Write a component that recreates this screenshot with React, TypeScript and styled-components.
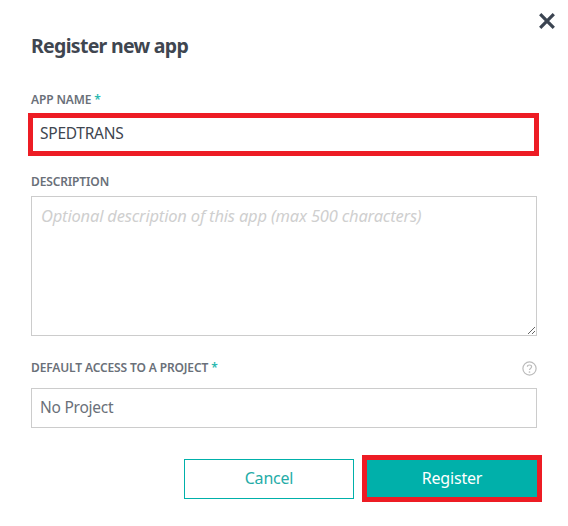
import styled, { createGlobalStyle } from "styled-components";

const GlobalStyle = createGlobalStyle`
  html, body {
    margin: 0;
    background: #fff;
  }
  body {
    font-family: "Noto Sans", "Open Sans", sans-serif;
  }
  * {
    box-sizing: border-box;
  }
`;

const Dialog = styled.div`
  position: relative;
  width: 568px;
  height: 526px;
  padding: 32px 31px 0;
  background: #fff;
  overflow: hidden;
`;

const CloseButton = styled.button`
  position: absolute;
  top: 13px;
  right: 13px;
  width: 16px;
  height: 16px;
  padding: 0;
  border: 0;
  background: none;
  color: #3b4451;
  display: flex;
`;

const Title = styled.h2`
  margin: 0;
  font-size: 19.5px;
  line-height: 28px;
  font-weight: 700;
  letter-spacing: -0.7px;
  color: #3f4650;
`;

const Field = styled.div<{ $top: number }>`
  margin-top: ${(p) => p.$top}px;
`;

const LabelRow = styled.div<{ $gap: number }>`
  display: flex;
  justify-content: space-between;
  align-items: center;
  height: 14px;
  margin-bottom: ${(p) => p.$gap}px;
`;

const Label = styled.label`
  font-size: 12px;
  line-height: 14px;
  font-weight: 600;
  letter-spacing: -0.13px;
  text-transform: uppercase;
  color: #6a7079;
`;

const Required = styled.span`
  color: #2bb8b0;
`;

const HelpIcon = styled.span`
  display: flex;
  color: #bcbcbc;
`;

const Highlight = styled.div`
  margin: 0 -2px 0 -3px;
  border: 5px solid #ed1c24;
`;

const TextInput = styled.input<{ $bare?: boolean }>`
  display: block;
  width: 100%;
  height: ${(p) => (p.$bare ? "33px" : "40px")};
  padding: ${(p) => (p.$bare ? "0 7px 3px" : "0 9px 2px 8px")};
  border: ${(p) => (p.$bare ? "0" : "1px solid #cccccc")};
  border-radius: 0;
  outline: none;
  font-family: inherit;
  font-size: 15.5px;
  letter-spacing: -0.25px;
  color: ${(p) => (p.$bare ? "#3f4650" : "#6a7079")};
  background: #fff;
`;

const TextArea = styled.textarea`
  display: block;
  width: 100%;
  height: 140px;
  padding: 7px 9px;
  border: 1px solid #cccccc;
  border-radius: 0;
  outline: none;
  font-family: inherit;
  font-size: 16.5px;
  line-height: 24px;
  letter-spacing: -0.18px;
  background: #fff;

  &::placeholder {
    font-style: italic;
    color: #cfcfcf;
    opacity: 1;
  }
`;

const Footer = styled.div`
  display: flex;
  justify-content: flex-end;
  align-items: center;
  gap: 8px;
  height: 47px;
  margin: 27px -5px 0 0;
`;

const CancelButton = styled.button`
  width: 170px;
  height: 40px;
  padding: 0 0 2px;
  border: 1px solid #00b0aa;
  border-radius: 0;
  background: #fff;
  color: #25aca7;
  font-family: inherit;
  font-size: 16px;
  letter-spacing: -0.2px;
`;

const SubmitFrame = styled.div`
  width: 180px;
  height: 47px;
  border: 5px solid #ed1c24;
`;

const SubmitButton = styled.button`
  display: block;
  width: 100%;
  height: 100%;
  padding: 0 0 2px;
  border: 0;
  border-radius: 0;
  background: #00b0aa;
  color: #fff;
  font-family: inherit;
  font-size: 16px;
  letter-spacing: -0.2px;
`;

export default function App() {
  return (
    <Dialog>
      <GlobalStyle />
      <CloseButton aria-label="Close">
        <svg width="16" height="16" viewBox="0 0 16 16" fill="none">
          <path d="M1.2 1.2l13.6 13.6M14.8 1.2L1.2 14.8" stroke="currentColor" strokeWidth="3.2" />
        </svg>
      </CloseButton>
      <Title>Register new app</Title>
      <Field $top={33}>
        <LabelRow $gap={6}>
          <Label>
            App name <Required>*</Required>
          </Label>
        </LabelRow>
        <Highlight>
          <TextInput $bare readOnly value="SPEDTRANS" />
        </Highlight>
      </Field>
      <Field $top={19}>
        <LabelRow $gap={7}>
          <Label>Description</Label>
        </LabelRow>
        <TextArea placeholder="Optional description of this app (max 500 characters)" />
      </Field>
      <Field $top={25}>
        <LabelRow $gap={13}>
          <Label>
            Default access to a project <Required>*</Required>
          </Label>
          <HelpIcon>
            <svg width="15" height="15" viewBox="0 0 15 15" fill="none">
              <circle cx="7.5" cy="7.5" r="6.6" stroke="currentColor" strokeWidth="1.2" />
              <path
                d="M5.4 5.8c0-1.2 1-1.8 2.1-1.8s2.1.7 2.1 1.8c0 1.6-2.1 1.6-2.1 3.2"
                stroke="currentColor"
                strokeWidth="1.2"
              />
              <circle cx="7.5" cy="11" r=".85" fill="currentColor" />
            </svg>
          </HelpIcon>
        </LabelRow>
        <TextInput readOnly value="No Project" />
      </Field>
      <Footer>
        <CancelButton>Cancel</CancelButton>
        <SubmitFrame>
          <SubmitButton>Register</SubmitButton>
        </SubmitFrame>
      </Footer>
    </Dialog>
  );
}
